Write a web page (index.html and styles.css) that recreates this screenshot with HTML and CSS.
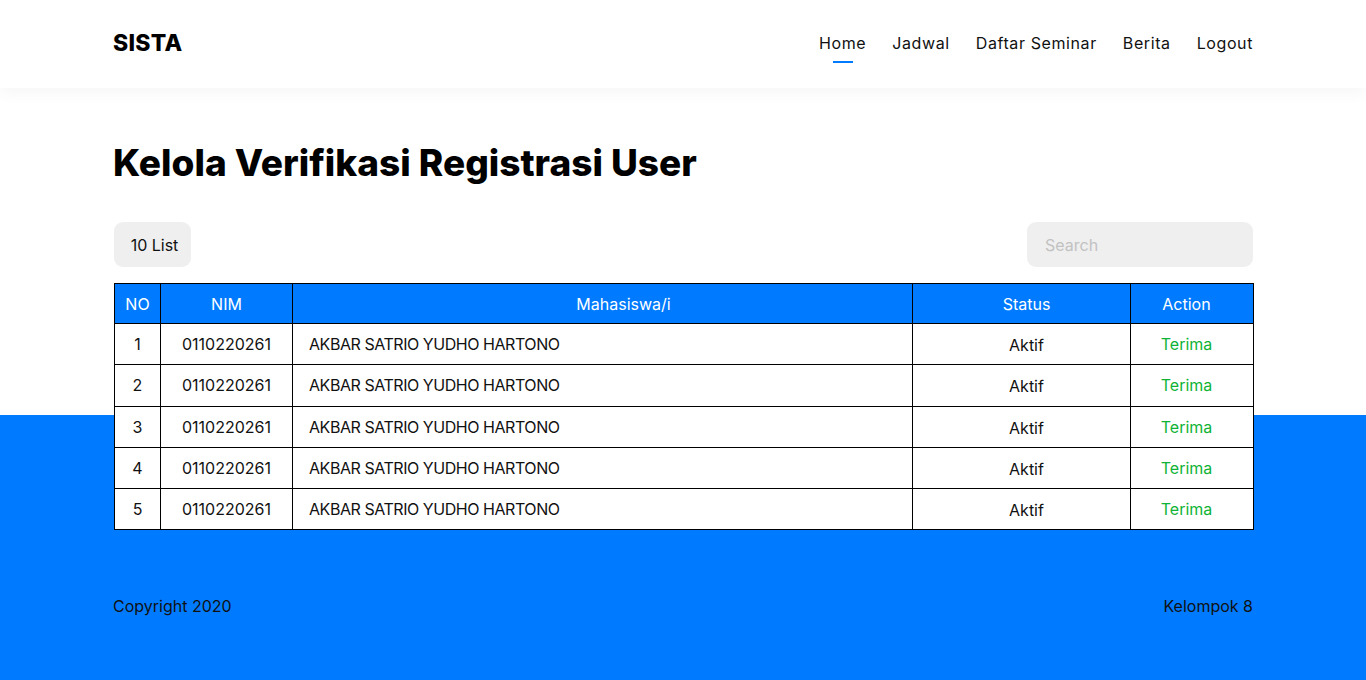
FILE: index.html
```html
<!DOCTYPE html>
<html lang="id">
<head>
<meta charset="utf-8">
<title>SISTA</title>
<link rel="stylesheet" href="styles.css">
</head>
<body>
<header class="topbar">
  <div class="container topbar-inner">
    <div class="logo">SISTA</div>
    <nav class="nav">
      <a class="nav-link active" href="#">Home</a>
      <a class="nav-link" href="#">Jadwal</a>
      <a class="nav-link" href="#">Daftar Seminar</a>
      <a class="nav-link" href="#">Berita</a>
      <a class="nav-link" href="#">Logout</a>
    </nav>
  </div>
</header>
<main class="container main">
  <h1 class="title">Kelola Verifikasi Registrasi User</h1>
  <div class="toolbar">
    <button class="list-btn">10 List</button>
    <input class="search" type="text" placeholder="Search">
  </div>
  <table class="grid">
    <colgroup>
      <col class="c-no"><col class="c-nim"><col class="c-name"><col class="c-status"><col class="c-action">
    </colgroup>
    <thead>
      <tr><th>NO</th><th>NIM</th><th class="h-name">Mahasiswa/i</th><th class="status">Status</th><th class="action">Action</th></tr>
    </thead>
    <tbody>
      <tr><td class="ctr">1</td><td class="ctr">0110220261</td><td class="name">AKBAR SATRIO YUDHO HARTONO</td><td class="ctr status low">Aktif</td><td class="ctr action ok">Terima</td></tr>
      <tr><td class="ctr">2</td><td class="ctr">0110220261</td><td class="name">AKBAR SATRIO YUDHO HARTONO</td><td class="ctr status low">Aktif</td><td class="ctr action ok">Terima</td></tr>
      <tr><td class="ctr">3</td><td class="ctr">0110220261</td><td class="name">AKBAR SATRIO YUDHO HARTONO</td><td class="ctr status low">Aktif</td><td class="ctr action ok">Terima</td></tr>
      <tr><td class="ctr">4</td><td class="ctr">0110220261</td><td class="name">AKBAR SATRIO YUDHO HARTONO</td><td class="ctr status low">Aktif</td><td class="ctr action ok">Terima</td></tr>
      <tr><td class="ctr">5</td><td class="ctr">0110220261</td><td class="name">AKBAR SATRIO YUDHO HARTONO</td><td class="ctr status low">Aktif</td><td class="ctr action ok">Terima</td></tr>
    </tbody>
  </table>
</main>
<footer class="container footer">
  <span>Copyright 2020</span>
  <span>Kelompok 8</span>
</footer>
</body>
</html>
```
FILE: styles.css
```css
* { box-sizing: border-box; }
html, body { margin: 0; padding: 0; }
body {
  font-family: "Inter", "Noto Sans", sans-serif;
  color: #111;
  min-height: 680px;
  background: linear-gradient(to bottom, #ffffff 0, #ffffff 415px, #007bff 415px, #007bff 100%);
}
.container { width: 1140px; margin: 0 auto; }
.topbar {
  background: #fff;
  height: 88px;
  box-shadow: 0 6px 14px rgba(0, 0, 0, 0.035);
  position: relative;
}
.topbar-inner {
  height: 88px;
  display: flex;
  align-items: center;
  justify-content: space-between;
}
.logo { font-size: 23px; font-weight: 800; color: #000; letter-spacing: 0.3px; margin-top: -2px; }
.nav { display: flex; gap: 26px; margin-top: -2px; }
.nav-link {
  font-size: 16px;
  color: #111;
  text-decoration: none;
  position: relative;
  line-height: 24px;
  letter-spacing: 0.6px;
}
.nav-link.active::after {
  content: "";
  position: absolute;
  left: 50%;
  margin-left: -10px;
  width: 20px;
  height: 2px;
  bottom: -8px;
  background: #007bff;
}
.main { padding-top: 51px; }
.title {
  margin: 0;
  font-size: 37px;
  line-height: 48px;
  font-weight: 800;
  color: #000;
}
.toolbar {
  margin-top: 35px;
  display: flex;
  justify-content: space-between;
  align-items: center;
}
.list-btn {
  border: none;
  background: #efefef;
  border-radius: 9px;
  height: 45px;
  width: 77px;
  margin-left: 1px;
  font: inherit;
  font-size: 16px;
  color: #111;
  padding: 0 0 0 4px;
}
.search {
  border: none;
  background: #efefef;
  border-radius: 9px;
  height: 45px;
  width: 226px;
  padding: 0 18px;
  font: inherit;
  font-size: 16px;
  outline: none;
}
.search::placeholder { color: #c2c2c2; }
.grid {
  margin-top: 16px;
  margin-left: 1px;
  width: 1139px;
  table-layout: fixed;
  border-collapse: collapse;
  background: #fff;
  font-size: 16px;
}
.c-no { width: 46px; }
.c-nim { width: 132px; }
.c-name { width: 620px; }
.c-status { width: 218px; }
.c-action { width: 123px; }
.grid th, .grid td { border: 1px solid #000; padding: 0; }
.grid th {
  background: #007bff;
  color: #fff;
  font-weight: 400;
  height: 40px;
  text-align: center;
}
.grid .h-name { padding-left: 42px; }
.grid td { height: 41.3px; color: #111; }
.grid .ctr { text-align: center; }
.grid .status { padding-left: 10px; }
.grid .action { padding-right: 11px; }
.grid .name { padding-left: 16px; letter-spacing: -0.45px; }
.grid .low { padding-top: 2px; }
.grid .ok { color: #0fb335; }
.footer {
  margin-top: 64px;
  height: 24px;
  display: flex;
  justify-content: space-between;
  align-items: center;
  font-size: 16px;
  color: #111;
}
```
